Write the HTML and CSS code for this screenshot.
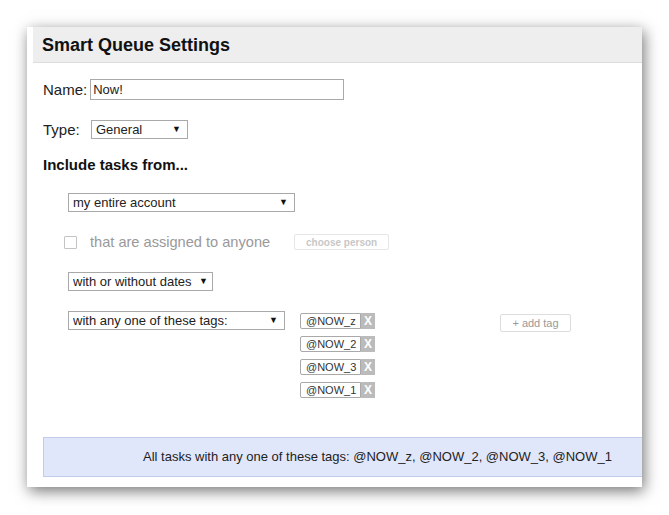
FILE: index.html
```html
<!DOCTYPE html>
<html lang="en">
<head>
    <meta charset="UTF-8">
    <title>Smart Queue Settings</title>
    <link rel="stylesheet" href="styles.css">
</head>
<body>
    <div class="dialog">
        <div class="dialog-inner">
            <div class="dialog-header">Smart Queue Settings</div>

            <div class="content">
                <div class="row">
                    <label class="field-label" for="queueName">Name:</label>
                    <input type="text" id="queueName" class="text-input" value="Now!">
                </div>

                <div class="row row-type">
                    <span class="field-label">Type:</span>
                    <span class="select-wrap select-type">
                        <select><option>General</option></select>
                    </span>
                </div>

                <h2 class="section-title">Include tasks from...</h2>

                <div class="indent">
                    <div class="row row-source">
                        <span class="select-wrap select-source">
                            <select><option>my entire account</option></select>
                        </span>
                    </div>

                    <div class="row row-assign">
                        <input type="checkbox" class="check" disabled>
                        <span class="muted">that are assigned to anyone</span>
                        <button class="small-button choose-button" disabled>choose person</button>
                    </div>

                    <div class="row row-dates">
                        <span class="select-wrap select-dates">
                            <select><option>with or without dates</option></select>
                        </span>
                    </div>

                    <div class="row row-tags">
                        <span class="select-wrap select-tags">
                            <select><option>with any one of these tags:</option></select>
                        </span>
                        <div class="tag-list">
                            <div class="tag"><span class="tag-name">@NOW_z</span><span class="tag-remove">X</span></div>
                            <div class="tag"><span class="tag-name">@NOW_2</span><span class="tag-remove">X</span></div>
                            <div class="tag"><span class="tag-name">@NOW_3</span><span class="tag-remove">X</span></div>
                            <div class="tag"><span class="tag-name">@NOW_1</span><span class="tag-remove">X</span></div>
                        </div>
                        <button class="small-button add-tag">+ add tag</button>
                    </div>
                </div>

                <div class="summary">All tasks with any one of these tags: @NOW_z, @NOW_2, @NOW_3, @NOW_1</div>
            </div>
        </div>
    </div>
</body>
</html>
```

FILE: styles.css
```css
body {
    margin: 0;
    padding: 27px;
    background-color: #fff;
    font-family: "Liberation Sans", Arial, sans-serif;
    color: #222;
}
.dialog {
    width: 615px;
    height: 460px;
    background-color: #fff;
    overflow: hidden;
    box-shadow: 2px 4px 14px rgba(0, 0, 0, 0.55);
    padding-left: 6px;
    box-sizing: border-box;
}
.dialog-inner {
    width: 700px;
}
.dialog-header {
    height: 36px;
    line-height: 37px;
    box-sizing: border-box;
    background-color: #eee;
    border-bottom: 1px solid #ddd;
    padding-left: 9px;
    font-size: 18px;
    font-weight: bold;
    color: #111;
}
.content {
    padding: 16px 0 0 10px;
}
.row {
    display: flex;
    align-items: center;
}
.field-label {
    font-size: 15px;
    color: #222;
}
.text-input {
    margin-left: 3px;
    width: 254px;
    height: 21px;
    box-sizing: border-box;
    border: 1px solid #a9a9a9;
    padding: 0 2px;
    font-family: inherit;
    font-size: 13px;
    color: #222;
    outline: none;
}
.row-type {
    margin-top: 20px;
}
.row-type .field-label {
    width: 48px;
}
.select-wrap {
    position: relative;
    display: inline-block;
}
.select-wrap::after {
    content: "\25BC";
    position: absolute;
    right: 7px;
    top: 4px;
    font-size: 9px;
    color: #111;
    pointer-events: none;
}
.select-wrap select {
    appearance: none;
    -webkit-appearance: none;
    height: 19px;
    box-sizing: border-box;
    border: 1px solid #a9a9a9;
    border-radius: 0;
    background-color: #fff;
    padding: 0 0 0 4px;
    font-family: inherit;
    font-size: 13px;
    color: #222;
    outline: none;
}
.select-type select { width: 97px; }
.select-source select { width: 227px; }
.select-dates select { width: 145px; }
.select-tags select { width: 217px; }
.select-dates::after { right: 5px; }
.section-title {
    margin: 17px 0 0 0;
    font-size: 15px;
    font-weight: bold;
    color: #111;
    line-height: 17px;
}
.indent {
    padding-left: 25px;
}
.row-source {
    margin-top: 20px;
}
.row-assign {
    margin-top: 22px;
    height: 16px;
}
.check {
    appearance: none;
    -webkit-appearance: none;
    margin: 0 0 0 -4px;
    width: 13px;
    height: 13px;
    border: 1px solid #c4c4c4;
    border-radius: 1px;
    background-color: #fff;
}
.muted {
    margin-left: 13px;
    font-size: 14.6px;
    line-height: 16px;
    color: #999;
}
.small-button {
    height: 16px;
    box-sizing: border-box;
    border: 1px solid #e6e6e6;
    border-radius: 2px;
    background-color: #fff;
    font-family: inherit;
    font-size: 10px;
    color: #c8c8c8;
    padding: 0;
}
.choose-button {
    margin-left: 24px;
    width: 95px;
    font-weight: bold;
}
.row-dates {
    margin-top: 22px;
}
.row-tags {
    margin-top: 20px;
    align-items: flex-start;
}
.tag-list {
    margin-left: 15px;
    margin-top: 2px;
    display: flex;
    flex-direction: column;
    gap: 7px;
}
.tag {
    display: flex;
    height: 16px;
}
.tag-name {
    width: 61px;
    box-sizing: border-box;
    border: 1px solid #a9a9a9;
    border-radius: 2px 0 0 2px;
    padding-left: 5px;
    font-size: 11px;
    line-height: 14px;
    color: #333;
}
.tag-remove {
    width: 14px;
    background-color: #bbb;
    color: #fff;
    font-size: 12px;
    font-weight: bold;
    text-align: center;
    line-height: 16px;
}
.add-tag {
    margin-left: 125px;
    margin-top: 3px;
    width: 71px;
    height: 18px;
    border-color: #ddd;
    font-size: 11px;
    color: #999;
}
.summary {
    margin-top: 39px;
    height: 40px;
    box-sizing: border-box;
    background-color: #e1e7fb;
    border: 1px solid #c3cbea;
    padding-left: 99px;
    line-height: 38px;
    font-size: 13px;
    color: #222;
}
```
